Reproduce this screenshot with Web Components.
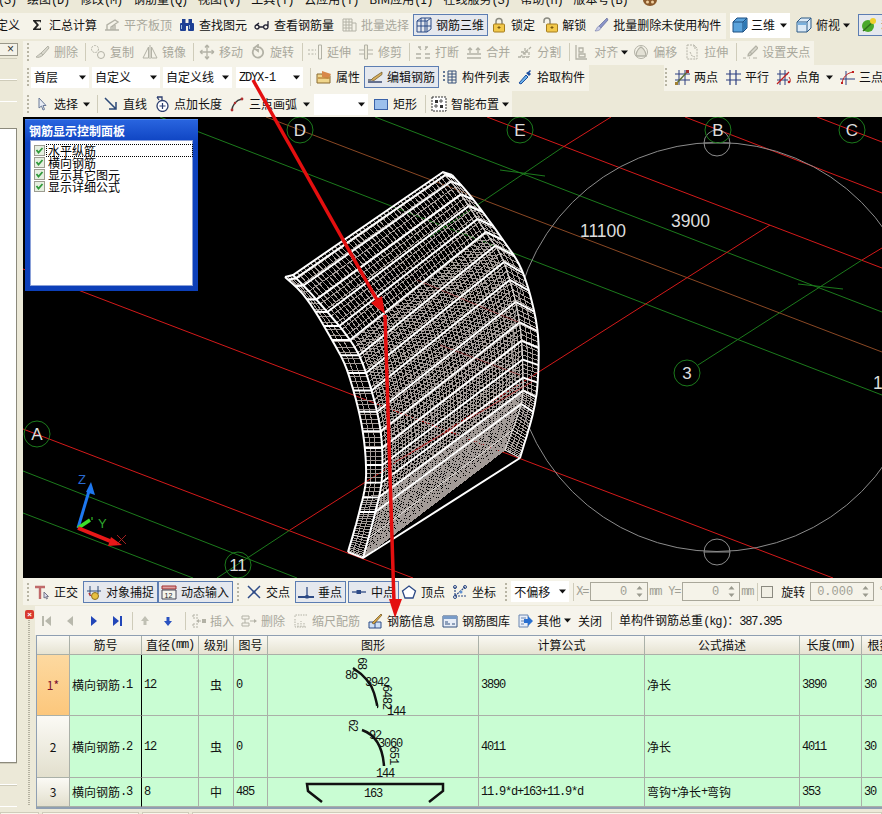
<!DOCTYPE html>
<html lang="zh">
<head>
<meta charset="utf-8">
<title>钢筋三维</title>
<style>
  html, body { margin: 0; padding: 0; }
  body {
    width: 882px; height: 814px; overflow: hidden; position: relative;
    background: #ece9d8; color: #111;
    font: 12px/14px "Noto Sans CJK SC", "Liberation Sans", sans-serif;
    display: flex; flex-direction: column;
  }
  .n { font-family: "Liberation Mono", monospace; letter-spacing: -1.2px; }
  .work { display: flex; flex: 1; min-height: 0; }
  .col { flex: 1; min-width: 0; display: flex; flex-direction: column; }
</style>
</head>
<body>

<menu-bar></menu-bar>

<tool-row style="height:27px">
  <tool-strip style="width:726px;height:26px">
    <tool-btn style="margin-left:-7px">定义</tool-btn>
    <tool-btn icon="sigma" style="margin-left:2px">汇总计算</tool-btn>
    <tool-btn icon="flat" disabled>平齐板顶</tool-btn>
    <tool-btn icon="binoc">查找图元</tool-btn>
    <tool-btn icon="glasses">查看钢筋量</tool-btn>
    <tool-btn icon="batch" disabled>批量选择</tool-btn>
    <tool-btn icon="grid3d" active>钢筋三维</tool-btn>
    <tool-btn icon="lock">锁定</tool-btn>
    <tool-btn icon="unlock">解锁</tool-btn>
    <tool-btn icon="brush">批量删除未使用构件</tool-btn>
  </tool-strip>
  <tool-strip style="height:26px;background:none">
    <drop-down icon="cube" style="width:60px;margin:0 3px 0 4px;height:25px">三维</drop-down>
    <tool-btn icon="cube2" arrow="3">俯视</tool-btn>
    <tool-btn icon="leaf" active style="margin-left:4px">动态观察</tool-btn>
  </tool-strip>
</tool-row>

<div class="work">
  <side-panel></side-panel>
  <div class="col">
    <tool-row style="height:24px;margin-top:1px">
      <tool-strip style="width:791px">
        <tool-grip style="margin-left:3px"></tool-grip>
        <tool-btn icon="pen" disabled>删除</tool-btn>
        <tool-sep style="margin-left:1px"></tool-sep>
        <tool-btn icon="copy" disabled>复制</tool-btn>
        <tool-btn icon="mirror" disabled style="margin-left:1px">镜像</tool-btn>
        <tool-sep style="margin-left:1px"></tool-sep>
        <tool-btn icon="move" disabled style="margin-left:1px">移动</tool-btn>
        <tool-btn icon="rotate" disabled>旋转</tool-btn>
        <tool-sep style="margin-left:2px"></tool-sep>
        <tool-btn icon="extend" disabled>延伸</tool-btn>
        <tool-btn icon="trim" disabled>修剪</tool-btn>
        <tool-sep style="margin-left:1px"></tool-sep>
        <tool-btn icon="brk" disabled style="margin-left:1px">打断</tool-btn>
        <tool-btn icon="merge" disabled>合并</tool-btn>
        <tool-btn icon="split" disabled>分割</tool-btn>
        <tool-sep style="margin-left:2px"></tool-sep>
        <tool-btn icon="align" disabled arrow="3">对齐</tool-btn>
        <tool-btn icon="offset" disabled style="margin-left:-2px">偏移</tool-btn>
        <tool-btn icon="stretch" disabled>拉伸</tool-btn>
        <tool-sep style="margin-left:2px"></tool-sep>
        <tool-btn icon="gripper" disabled style="margin-left:1px">设置夹点</tool-btn>
      </tool-strip>
    </tool-row>

    <tool-row style="height:26px">
      <tool-strip style="width:566px">
        <tool-grip style="margin-left:3px"></tool-grip>
        <drop-down style="width:58px">首层</drop-down>
        <drop-down style="width:68px;margin-left:3px">自定义</drop-down>
        <drop-down style="width:69px;margin-left:3px">自定义线</drop-down>
        <drop-down style="width:67px;margin-left:4px"><span class="n">ZDYX-1</span></drop-down>
        <tool-sep style="margin-left:5px"></tool-sep>
        <tool-btn icon="folder" style="margin-left:1px">属性</tool-btn>
        <tool-btn icon="editpen" active>编辑钢筋</tool-btn>
        <tool-btn icon="list">构件列表</tool-btn>
        <tool-btn icon="dropper">拾取构件</tool-btn>
      </tool-strip>
      <tool-strip style="margin-left:75px;flex:1">
        <tool-grip></tool-grip>
        <tool-btn icon="twopt" style="margin-left:2px">两点</tool-btn>
        <tool-btn icon="parallel">平行</tool-btn>
        <tool-btn icon="ptangle" arrow="6">点角</tool-btn>
        <tool-btn icon="threept" style="margin-left:-1px">三点</tool-btn>
      </tool-strip>
    </tool-row>

    <tool-row style="height:26px">
      <tool-strip style="width:489px;padding-bottom:0">
        <tool-grip style="margin-left:3px"></tool-grip>
        <tool-btn icon="cursor" arrow="5">选择</tool-btn>
        <tool-sep style="margin-left:1px"></tool-sep>
        <tool-btn icon="line" style="margin-left:1px">直线</tool-btn>
        <tool-btn icon="ptlen">点加长度</tool-btn>
        <tool-btn icon="arc" arrow="6">三点画弧</tool-btn>
        <drop-down style="width:54px"></drop-down>
        <tool-btn icon="rect" style="margin-left:2px">矩形</tool-btn>
        <tool-sep style="margin-left:2px"></tool-sep>
        <tool-btn icon="smart" arrow="3" style="margin-left:1px">智能布置</tool-btn>
      </tool-strip>
    </tool-row>

    <cad-view>
      <control-panel>
        <check-item focused>水平纵筋</check-item>
        <check-item>横向钢筋</check-item>
        <check-item>显示其它图元</check-item>
        <check-item>显示详细公式</check-item>
      </control-panel>
    </cad-view>

    <tool-row style="height:27px">
      <tool-strip style="flex:1;height:27px;padding-bottom:0">
        <tool-grip style="margin-left:3px"></tool-grip>
        <tool-btn icon="ortho">正交</tool-btn>
        <tool-btn icon="snap" active style="margin-left:1px">对象捕捉</tool-btn>
        <tool-btn icon="dyn" active>动态输入</tool-btn>
        <tool-grip style="margin-left:3px"></tool-grip>
        <tool-btn icon="inter" style="margin-left:2px">交点</tool-btn>
        <tool-btn icon="perp" active style="margin-left:1px">垂点</tool-btn>
        <tool-btn icon="mid" active style="margin-left:2px">中点</tool-btn>
        <tool-btn icon="vertex" style="margin-left:-1px">顶点</tool-btn>
        <tool-btn icon="coord">坐标</tool-btn>
        <tool-grip style="margin-left:4px"></tool-grip>
        <drop-down style="width:58px;margin-left:2px">不偏移</drop-down>
        <tool-sep style="margin-left:2px"></tool-sep>
        <dim-label style="margin-left:1px;width:14px">X=</dim-label>
        <spin-input style="width:58px">0</spin-input>
        <dim-label style="margin-left:1px;width:19px">mm</dim-label>
        <dim-label style="width:14px">Y=</dim-label>
        <spin-input style="width:58px">0</spin-input>
        <dim-label style="margin-left:1px;width:14px">mm</dim-label>
        <tool-sep></tool-sep>
        <check-box style="margin-left:2px"></check-box>
        <tool-btn style="margin-left:5px">旋转</tool-btn>
        <spin-input style="width:64px;margin-left:1px">0.000</spin-input>
        <dim-label style="margin-left:4px;width:8px">°</dim-label>
      </tool-strip>
    </tool-row>

    <rebar-panel></rebar-panel>
  </div>
</div>

<note-arrows></note-arrows>

<script>
const G = '#b3b2a6';
const ICONS = {
  sigma: `<path d="M4 3h8v3l-1-1.6H7l3 3.6-3 3.6h4l1-1.6v3H4v-1l3.6-4L4 4z" fill="#222"/>`,
  flat: `<path d="M1 13h14M3 13V8l8-5 3 2-7 5v3M11 13V8M9 13V9" stroke="${G}" stroke-width="1.4" fill="none"/>`,
  binoc: `<g fill="#1d3f94"><rect x="1" y="6" width="6" height="8" rx="1"/><rect x="9" y="6" width="6" height="8" rx="1"/><rect x="3" y="2" width="3.5" height="5"/><rect x="9.5" y="2" width="3.5" height="5"/><rect x="6" y="6" width="4" height="3"/></g><path d="M2.5 8v4M10.5 8v4" stroke="#9bd"/>`,
  glasses: `<path d="M5 10a2 2 0 1 1-4 0 2 2 0 0 1 4 0zM14 4v6a2.2 2.2 0 1 1-4.4 0 2.2 2.2 0 0 1 4.4 0M5 10h4.6M1.5 8.5 5 6" stroke="#223" stroke-width="1.3" fill="none"/>`,
  batch: `<path d="M2 2h9v12H2zM2 5h9M2 8h9M2 11h9M5 2v12M8 2v12M11 6h4v8h-4" stroke="${G}" fill="none"/>`,
  grid3d: `<path d="M1 4 5 1h10v11l-4 3H1zM1 4h10v11M11 4l4-3M5 1v14M9 1v14M1 9h14" stroke="#2b4a86" fill="none"/>`,
  lock: `<path d="M5 7V4.5a3 3 0 0 1 6 0V7" stroke="#8a8a80" stroke-width="1.5" fill="none"/><rect x="2.5" y="7" width="11" height="8" rx="1" fill="#f2c84a" stroke="#a57d1e"/><path d="M8 9v3M6.500 10.500h3" stroke="#7a5a10"/>`,
  unlock: `<path d="M2 6V4a3 3 0 0 1 6 0v3" stroke="#8a8a80" stroke-width="1.5" fill="none"/><rect x="4.500" y="7" width="11" height="8" rx="1" fill="#f2c84a" stroke="#a57d1e"/><path d="M10 9v3M8.500 10.500h3" stroke="#7a5a10"/>`,
  brush: `<path d="M14 1 6 9l2 2 7-8z" fill="#8a94c8" stroke="#555f90" stroke-width=".6"/><path d="M6 9c-2 .5-2 3-4 5 3 0 5.500-1 6-3z" fill="#c8cce8" stroke="#7078a8" stroke-width=".6"/>`,
  cube: `<path d="M1 5 5 1h10v10l-4 4H1z" fill="#5aa3dc" stroke="#1d4e80"/><path d="M1 5h10v10M11 5l4-4" stroke="#1d4e80" fill="none"/><path d="M11.500 5.500 14.500 2.500v8l-3 3z" fill="#2d78b4"/>`,
  cube2: `<path d="M1 5 5 1h10v10l-4 4H1z" fill="#dceaf6" stroke="#2d5a86"/><path d="M1 5h10v10M11 5l4-4" stroke="#2d5a86" fill="none"/><path d="M1.500 5.500h9V8h-9z" fill="#7ab0dc"/>`,
  leaf: `<circle cx="7" cy="9" r="6" fill="#4aa82a"/><path d="M2 14 14 3" stroke="#2f6e1a" stroke-width="1.500"/><circle cx="12" cy="4" r="3" fill="#f0d030"/>`,
  pen: `<path d="M14 2 7 9l2 2 6-7zM7 9c-2 1-3 3-5 4 2 1 5 0 7-2" stroke="${G}" fill="#d8d7cc"/>`,
  copy: `<circle cx="5" cy="5" r="3.500" stroke="${G}" fill="none" stroke-dasharray="2 1"/><circle cx="11" cy="11" r="3.500" stroke="${G}" fill="none"/>`,
  mirror: `<path d="M8 1v14" stroke="${G}"/><path d="M6.500 3v11H1zM9.500 3v11H15z" stroke="${G}" fill="none"/>`,
  move: `<path d="M8 1v14M1 8h14M8 1 6 3.500M8 1l2 2.500M8 15l-2-2.500M8 15l2-2.500M1 8l2.500-2M1 8l2.500 2M15 8l-2.500-2M15 8l-2.500 2" stroke="${G}" stroke-width="1.300" fill="none"/>`,
  rotate: `<path d="M4 5a5.200 5.200 0 1 0 4-1.800V1L4 4l4 3V5" stroke="${G}" stroke-width="1.800" fill="none"/>`,
  extend: `<path d="M1 6h8M1 10h8" stroke="${G}" stroke-dasharray="2 1.500"/><path d="M11.500 1h3v14h-3z" stroke="${G}" fill="none"/>`,
  trim: `<path d="M1 6h14M1 10h14" stroke="${G}"/><path d="M6.500 1h3v14h-3z" stroke="${G}" fill="#ece9d8"/>`,
  brk: `<path d="M1 10h5M10 10h5M1 14h5M10 14h5M6 6 4 3M10 6l2-3M3 3h3M10 3h3" stroke="${G}" stroke-width="1.300" fill="none"/>`,
  merge: `<path d="M1 10h14M1 14h14M4 4v5M12 4v5M2 6l2-2 2 2M10 6l2-2 2 2" stroke="${G}" stroke-width="1.300" fill="none"/>`,
  split: `<path d="M1 13h12M3 13l11-10M4 8h8M8 4v9M12 8v5" stroke="${G}" stroke-width="1.300" stroke-dasharray="3 1" fill="none"/>`,
  align: `<path d="M2 1v14h11M5 4h4v4H5zM5 10h6v3H5z" stroke="${G}" stroke-width="1.300" fill="none"/>`,
  offset: `<circle cx="8" cy="8" r="6.500" stroke="${G}" fill="none"/><path d="M3 12c0-6 5-9 5-9s5 3 5 9H3" stroke="${G}" stroke-width="1.400" fill="#e3e1d5"/>`,
  stretch: `<path d="M3 1h7l3 3v11H3zM10 1v3h3M6 8l2 4 3 1" stroke="${G}" stroke-dasharray="2 1" fill="none"/>`,
  gripper: `<path d="M14 2 8 8l2 2 6-6zM8 8c-1 1-2 3-2 4 1.500 0 3-1 4-2M1 14h3M7 14h1M11 14h4" stroke="${G}" stroke-width="1.200" fill="#dad9ce"/>`,
  folder: `<path d="M1 5h5l1 1.500h7V14H1z" fill="#f0d68c" stroke="#8a6a30"/><path d="M6 2 15 5l-3 5-6-2z" fill="#d8884a"/><path d="M2 9h12" stroke="#c08a40" stroke-width="1.500"/>`,
  editpen: `<path d="M1 13h14" stroke="#3a4a70" stroke-width="1.500"/><path d="M15 3 6 9l-2 2 3 .5 8-6z" fill="#d8b060" stroke="#6a5020" stroke-width=".7"/><path d="M1 11h3" stroke="#222"/>`,
  list: `<path d="M6 2h8v12H6zM6 5h8M6 8h8M6 11h8M10 2v12" stroke="#36507a" fill="none"/><path d="M1 3h3M1 7h3M1 11h3" stroke="#36507a" stroke-width="1.600" stroke-dasharray="2 1"/>`,
  dropper: `<path d="M2 14 9 6l2 2-7 7z" fill="#6ab0e8" stroke="#1d4e9e"/><path d="M9 4 12 7l2-2-1.500-1.500L14 2l-1-1-1.500 1.500z" fill="#1d4e9e"/>`,
  twopt: `<path d="M1 5h15M1 11h15M5 1v15M11 1v15" stroke="#2d3f80"/><path d="M2 15 14 2" stroke="#5a7030" stroke-width="1.300"/><rect x="12" y="1" width="3" height="3" fill="#a03030"/><rect x="1" y="13" width="3" height="3" fill="#a08030"/>`,
  parallel: `<path d="M1 5h15M1 11h15M5 1v15M11 1v15" stroke="#2d3f80" stroke-width="1.200"/>`,
  ptangle: `<path d="M1 5h11M1 11h11M4 1v15M9 1v15" stroke="#2d3f80"/><path d="M1 15 13 3" stroke="#c02020" stroke-width="1.300"/><path d="M13 8a5 5 0 0 1 1 5" stroke="#c02020" fill="none"/><circle cx="13" cy="13" r="1.300" fill="#c02020"/>`,
  threept: `<path d="M1 10h15M7 2v14" stroke="#2d3f80"/><path d="M3 14C4 8 8 4 14 3" stroke="#c02020" fill="none"/><rect x="2" y="13" width="2" height="2" fill="#c02020"/><rect x="13" y="2" width="2" height="2" fill="#c02020"/>`,
  cursor: `<path d="M5 2v10l2.500-2 1.500 4 1.500-.6-1.500-3.900h3z" fill="#e8ecf4" stroke="#6a7a98"/>`,
  line: `<path d="M2 2 13 13M13 6v7H6" stroke="#2d4a78" stroke-width="1.500" fill="none"/>`,
  ptlen: `<circle cx="8.500" cy="10" r="5.500" stroke="#2d3f70" stroke-width="1.300" fill="#fff"/><path d="M8.500 7v6M5.500 10h6" stroke="#2d3f70" stroke-width="1.200"/><path d="M3 1h5v3M3 1l2 3" stroke="#2d3f70" stroke-width="1.300" fill="none"/>`,
  arc: `<path d="M3 15C3 9 7 4 13 3" stroke="#3a3a3a" stroke-width="1.500" fill="none"/><circle cx="3" cy="14" r="1.400" fill="#b03030"/><circle cx="6" cy="7" r="1.200" fill="#b03030"/><circle cx="13" cy="3" r="1.400" fill="#b03030"/>`,
  rect: `<rect x="1.500" y="3.500" width="13" height="10" fill="#9cc0ec" stroke="#3a62a8"/>`,
  smart: `<path d="M1 1h14v14H1z" stroke="#333" stroke-dasharray="2 1" fill="#fff"/><path d="M4 4h3v3H4zM9 9h3v3H9z" fill="#333"/><path d="M10 3v4M8 5h4M3 10h4M5 8v4" stroke="#555"/>`,
  ortho: `<path d="M1 3h10M6 3v12" stroke="#c06a6a" stroke-width="2.400"/><path d="M10 8v6l1.500-1 1 2 1-.5-1-2h2z" fill="#dde" stroke="#778"/>`,
  snap: `<path d="M1 7h14M4 2v8M12 2v8" stroke="#2d4a78"/><circle cx="9" cy="12" r="3.500" fill="#e8c040" stroke="#8a7020"/><path d="M3 9l1.500 3" stroke="#b03030" stroke-width="1.500"/>`,
  dyn: `<path d="M1 2h14v3H1z" fill="#e0a0a0" stroke="#a03030"/><path d="M1 6h14v9H1z" fill="#f4f4ec" stroke="#445"/><text x="3.500" y="13.500" font-size="7" font-family="Liberation Sans" fill="#222">12</text>`,
  inter: `<path d="M2 2 14 14M14 2 2 14" stroke="#2d4a86" stroke-width="1.500"/><circle cx="8" cy="8" r="1.500" fill="#2d4a86"/>`,
  perp: `<path d="M0 13h16" stroke="#2d4a86" stroke-width="2"/><path d="M9 3v9" stroke="#2d4a86" stroke-width="1.300"/><rect x="7.500" y="11" width="3" height="3.500" fill="#2d4a86"/>`,
  mid: `<path d="M1 8h14" stroke="#2d4a86" stroke-width="1.300"/><rect x="5.500" y="6" width="4.500" height="4" fill="#2d4a86"/>`,
  vertex: `<path d="M8 2 14.500 7l-2.500 7H4L1.500 7z" stroke="#2d4a86" stroke-width="1.300" fill="#fff"/>`,
  coord: `<path d="M3 3v9h11M3 12 13 3" stroke="#2d4a86" stroke-dasharray="2 1" stroke-width="1.200" fill="none"/><circle cx="3" cy="3" r="1.500" fill="none" stroke="#2d4a86"/><circle cx="13" cy="3" r="1.500" fill="none" stroke="#2d4a86"/><circle cx="3" cy="13" r="1.500" fill="none" stroke="#2d4a86"/><circle cx="9" cy="8" r="1.500" fill="#6090d0"/>`,
  first: `<path d="M5 3v10" stroke="#b8b8ac" stroke-width="2"/><path d="M13 3v10L7 8z" fill="#b8b8ac"/>`,
  prev: `<path d="M11 3v10L5 8z" fill="#b8b8ac"/>`,
  next: `<path d="M5 3v10l6-5z" fill="#2246b8"/>`,
  last: `<path d="M3 3v10l6-5z" fill="#2246b8"/><path d="M11 3v10" stroke="#2246b8" stroke-width="2"/>`,
  up: `<path d="M8 3 4 8h2.500v4h3V8H12z" fill="#c0c0b4"/>`,
  down: `<path d="M8 13 4 8h2.500V4h3v4H12z" fill="#2a52c0"/>`,
  insert: `<path d="M3 2h5M3 2v3h5M3 11h5M3 11v3h5M9 8h5" stroke="${G}" stroke-dasharray="2 1" fill="none"/><path d="M9 6l-3 2 3 2z" fill="${G}"/><rect x="12" y="6" width="4" height="4" fill="${G}"/>`,
  del: `<path d="M1 3h7v3H1zM1 10h7v3H1zM4 6v4" stroke="${G}" fill="none"/><path d="M9 8h5" stroke="${G}"/><path d="M13 6l3 2-3 2z" fill="${G}"/>`,
  scale: `<path d="M3 4V2h12M3 6v8h12M6 14v-4M9 14v-6M12 14v-4" stroke="${G}" stroke-dasharray="1.500 1" fill="none"/>`,
  info: `<path d="M2 9h12v6H2zM8 9v6" stroke="#2d4a86" fill="#cfe0f4"/><path d="M14 1 5 10l2 1 8-9z" fill="#d8a848" stroke="#6a5020" stroke-width=".7"/>`,
  lib: `<path d="M1 3h14v11H1z" stroke="#33507e" fill="#e8eef8"/><path d="M1 3h14v3H1z" fill="#7a9cc8"/><path d="M3 11h5M10 11h3M3 9h3" stroke="#33507e"/>`,
  other: `<path d="M2 2h9v12H2zM4 5h5M4 8h3M4 11h3" stroke="#6a86b0" fill="#e8eef8"/><path d="M7 6h4V3l5 5-5 5v-3H7z" fill="#2a70d0"/>`
};

const svgArrow = gap => `<svg width="7" height="5" viewBox="0 0 7 5" style="margin-left:${gap}px;flex:none"><path d="M0 .5h7L3.500 4.500z" fill="#111"/></svg>`;

class ToolRow extends HTMLElement {
  connectedCallback() {
    if (this.shadowRoot) return;
    this.attachShadow({ mode: 'open' }).innerHTML = `
      <style>:host { display: flex; align-items: stretch; flex: none; overflow: hidden; }</style><slot></slot>`;
  }
}

class ToolStrip extends HTMLElement {
  connectedCallback() {
    if (this.shadowRoot) return;
    this.attachShadow({ mode: 'open' }).innerHTML = `
      <style>:host { display: flex; align-items: center; flex: none; box-sizing: border-box; padding-bottom: 2px; background: #f5f3e9; min-width: 0; overflow: hidden; }</style><slot></slot>`;
  }
}

class ToolBtn extends HTMLElement {
  connectedCallback() {
    if (this.shadowRoot) return;
    const icon = this.getAttribute('icon');
    const arrow = this.getAttribute('arrow');
    this.attachShadow({ mode: 'open' }).innerHTML = `
      <style>
        :host {
          display: inline-flex; align-items: center; flex: none; box-sizing: border-box;
          height: 22px; padding: 0 3px 0 2px; border: 1px solid transparent; white-space: nowrap;
        }
        :host([active]) { border-color: #5c7db2; background: #e5e8ee; }
        :host([disabled]) { color: #a9a89c; }
        svg.i { width: 16px; height: 16px; flex: none; margin-right: 4px; }
        :host([bare]) svg.i { margin-right: 0; }
      </style>
      ${icon ? `<svg class="i" viewBox="0 0 16 16">${ICONS[icon]}</svg>` : ''}<slot></slot>${arrow ? svgArrow(arrow) : ''}`;
  }
}

class ToolSep extends HTMLElement {
  connectedCallback() {
    if (this.shadowRoot) return;
    this.attachShadow({ mode: 'open' }).innerHTML = `
      <style>:host { display: block; flex: none; width: 4px; height: 18px; background: linear-gradient(#cfccba, #cfccba) 2px 0 / 1px 100% no-repeat; }</style>`;
  }
}

class ToolGrip extends HTMLElement {
  connectedCallback() {
    if (this.shadowRoot) return;
    this.attachShadow({ mode: 'open' }).innerHTML = `
      <style>:host { display: block; flex: none; width: 5px; height: 18px; background: repeating-linear-gradient(#b8b5a4 0 2px, transparent 2px 4px) 1px 0 / 2px 100% no-repeat; }</style>`;
  }
}

class DropDown extends HTMLElement {
  connectedCallback() {
    if (this.shadowRoot) return;
    const icon = this.getAttribute('icon');
    this.attachShadow({ mode: 'open' }).innerHTML = `
      <style>
        :host { display: inline-flex; align-items: center; flex: none; box-sizing: border-box; height: 21px; background: #fff; padding: 0 3px 0 3px; white-space: nowrap; }
        .t { flex: 1; min-width: 0; }
        svg.i { width: 16px; height: 16px; flex: none; margin-right: 3px; margin-left: -1px; }
      </style>
      ${icon ? `<svg class="i" viewBox="0 0 16 16">${ICONS[icon]}</svg>` : ''}<span class="t"><slot></slot></span>${svgArrow(0)}`;
  }
}

class DimLabel extends HTMLElement {
  connectedCallback() {
    if (this.shadowRoot) return;
    this.attachShadow({ mode: 'open' }).innerHTML = `
      <style>:host { display: block; flex: none; color: #a09f94; font: 12px "Liberation Mono", monospace; letter-spacing: -1.2px; }</style><slot></slot>`;
  }
}

class SpinInput extends HTMLElement {
  connectedCallback() {
    if (this.shadowRoot) return;
    this.attachShadow({ mode: 'open' }).innerHTML = `
      <style>
        :host { display: flex; align-items: center; flex: none; box-sizing: border-box; height: 19px; border: 1px solid #a9a79a; color: #a09f94; font: 12px "Liberation Mono", monospace; }
        .v { flex: 1; text-align: right; padding-right: 8px; }
        svg { flex: none; margin-right: 3px; }
      </style>
      <span class="v"><slot></slot></span>
      <svg width="9" height="15" viewBox="0 0 9 15"><path d="M4.500 2 7.500 5.500h-6zM4.500 13l3-3.500h-6z" fill="#9a9a8e"/></svg>`;
  }
}

class CheckBox extends HTMLElement {
  connectedCallback() {
    if (this.shadowRoot) return;
    this.attachShadow({ mode: 'open' }).innerHTML = `
      <style>:host { display: block; flex: none; width: 12px; height: 12px; box-sizing: border-box; border: 1px solid #8b8a80; background: #f1efe4; }</style>`;
  }
}

class MenuBar extends HTMLElement {
  connectedCallback() {
    if (this.shadowRoot) return;
    const items = [['', 'S'], ['绘图', 'D'], ['修改', 'M'], ['钢筋量', 'Q'], ['视图', 'V'], ['工具', 'T'], ['云应用', 'Y'], ['BIM应用', 'I'], ['在线服务', 'S'], ['帮助', 'H'], ['版本号', 'B']];
    this.attachShadow({ mode: 'open' }).innerHTML = `
      <style>
        :host { display: block; flex: none; height: 13px; overflow: hidden; background: #ece9d8; }
        .in { display: flex; gap: 11px; margin: -7px 0 0 -2px; line-height: 12px; white-space: nowrap; align-items: center; }
        .k { font-family: "Liberation Mono", monospace; letter-spacing: -1.2px; }
        .face { width: 16px; height: 14px; margin-left: 4px; }
      </style>
      <div class="in">
        ${items.map(([a, b]) => `<span>${a}<span class="k">(${b})</span></span>`).join('')}
        <svg class="face" viewBox="0 0 16 14"><ellipse cx="8" cy="7" rx="7" ry="6" fill="#8a5a2c"/><circle cx="5.500" cy="9" r="1.500" fill="#f0d0a0"/><circle cx="10.500" cy="9" r="1.500" fill="#f0d0a0"/></svg>
      </div>`;
  }
}

class SidePanel extends HTMLElement {
  connectedCallback() {
    if (this.shadowRoot) return;
    this.attachShadow({ mode: 'open' }).innerHTML = `
      <style>
        :host { display: flex; flex-direction: column; flex: none; width: 23px; box-sizing: border-box; padding-right: 6px; }
        .x { height: 11px; margin: 3px -1px 2px 0; border: 1px solid #9a988a; border-left: 0; background: #f4f2e8; font: 12px/10px "Liberation Sans", sans-serif; text-align: right; padding-right: 3px; color: #333; flex: none; }
        .r { height: 22px; border-bottom: 1px solid #fff; border-top: 1px solid #cfccba; box-sizing: border-box; flex: none; }
        .w { flex: 1; background: #fff; border: 1px solid #8c8a7c; border-left: 0; margin-top: 26px; }
      </style>
      <div class="x">×</div>
      <div class="r"></div><div class="r"></div>
      <div class="w"></div>
      <div class="r"></div><div class="r"></div>
      <div style="height:7px;flex:none"></div>`;
  }
}

class CheckItem extends HTMLElement {
  connectedCallback() {
    if (this.shadowRoot) return;
    this.attachShadow({ mode: 'open' }).innerHTML = `
      <style>
        :host { display: flex; align-items: center; height: 12px; color: #000; white-space: nowrap; }
        svg { flex: none; margin-right: 2px; }
        .t { flex: 1; padding-left: 1px; line-height: 11px; height: 11px; }
        :host([focused]) .t { outline: 1px dotted #000; }
      </style>
      <svg width="11" height="11" viewBox="0 0 11 11"><rect x=".5" y=".5" width="10" height="10" fill="#e6efe0" stroke="#9c9c90"/><path d="M2.500 5 4.500 7.500 8.500 3" stroke="#2f9a3a" stroke-width="1.800" fill="none"/></svg>
      <span class="t"><slot></slot></span>`;
  }
}

class ControlPanel extends HTMLElement {
  connectedCallback() {
    if (this.shadowRoot) return;
    this.attachShadow({ mode: 'open' }).innerHTML = `
      <style>
        :host { position: absolute; left: 2px; top: 2px; width: 173px; height: 172px; box-sizing: border-box; display: flex; flex-direction: column; padding: 0 5px 5px; background: linear-gradient(#2a66e0, #0d42c0 14%, #0c3fb8); box-shadow: inset 0 1px #4d86ee; }
        .h { height: 21px; flex: none; line-height: 24px; color: #fff; font-weight: 700; margin-left: -1px; }
        .b { flex: 1; background: #fff; border: 1px solid #8aa0d8; padding: 3px 0 0 3px; }
      </style>
      <div class="h">钢筋显示控制面板</div>
      <div class="b"><slot></slot></div>`;
  }
}

class CadView extends HTMLElement {
  connectedCallback() {
    if (this.shadowRoot) return;
    this.attachShadow({ mode: 'open' }).innerHTML = `
      <style>
        :host { display: block; position: relative; flex: none; height: 461px; background: #000; overflow: hidden; }
        svg { display: block; }
        text { font-family: "Liberation Sans", sans-serif; fill: #ddd; }
      </style>
      <svg width="859" height="461" viewBox="23 117 859 461">${this.scene()}</svg>
      <slot></slot>`;
  }

  scene() {
    const RED = '#d41a1a', GREEN = '#1c7a1c', BROWN = '#8a4824', GRAY = '#8c8c8c';
    const ln = (c, ...p) => `<polyline points="${p.join(' ')}" stroke="${c}" fill="none"/>`;
    const lines = [
      ln(RED, '487,117', '882,268'), ln(RED, '685,117', '882,193'), ln(RED, '817,117', '882,142'),
      ln(RED, '23,269', '833,578'), ln(RED, '23,429', '413,578'),
      ln(BROWN, '266,117', '882,352'),
      ln(GREEN, '375,117', '882,312'), ln(GREEN, '160,117', '882,395'),
      ln(GREEN, '23,471', '297,578'), ln(GREEN, '23,513', '193,578'),
      ln(GREEN, '217,578', '290,530'), ln(RED, '290,530', '770,225'),
      ln(GREEN, '430,237', '563,147'), ln(RED, '563,147', '611,117'),
      ln(GREEN, '698,365', '862,260'), ln(RED, '862,260', '882,248'),
      ln(GREEN, '500,170', '545,176'), ln(GREEN, '798,284', '843,289')
    ];
    const circle = (x, y, r, c) => `<circle cx="${x}" cy="${y}" r="${r}" stroke="${c}" fill="none"/>`;
    const gray = circle(717, 347, 204.5, GRAY) + circle(717, 143, 13, GRAY) + circle(717, 552, 13, GRAY) +
      ln(GRAY, '704,552', '730,552') + ln(GRAY, '704,143', '730,143');
    const axes = [['D', 300, 130], ['E', 520, 130], ['B', 718, 130], ['C', 852, 130], ['3', 687, 373], ['A', 37, 434], ['11', 238, 565]];
    const labels = axes.map(([t, x, y]) => circle(x, y, 13, GREEN) +
      `<text x="${x}" y="${y + 6}" font-size="17" text-anchor="middle">${t}</text>`).join('');
    const dims = `<text x="580" y="237" font-size="17.500">11100</text><text x="671" y="227" font-size="17.500">3900</text><text x="873" y="389" font-size="17.500">1</text>`;
    const axis = `
      <path d="M78 528 89 491" stroke="#1e78f0" stroke-width="3"/><path d="M91 482l4 13-9-3z" fill="#1e78f0"/>
      <path d="M78 528 90 520" stroke="#3be02a" stroke-width="3.500"/>
      <path d="M78 528 110 541" stroke="#e81818" stroke-width="4"/><path d="M122 545l-14 1 3-9z" fill="#e81818"/>
      <text x="78" y="484" font-size="13" style="fill:#2a6ad0">Z</text>
      <text x="98" y="528" font-size="13" style="fill:#2ea82e">Y</text>
      <path d="M92 517v3" stroke="#3be02a"/>
      <path d="M117 535l9 9M126 535l-9 9" stroke="#a02020"/>`;
    return lines.join('') + gray + labels + dims + axis + this.wall();
  }

  // the wall is a mesh over four edge curves, sampled with a catmull-rom spline
  wall() {
    const S = [175, 198, 240, 273, 327, 377, 413, 458];
    const E = [
      [[285, 277], [306, 298], [332, 340], [348, 373], [362, 427], [366, 477], [359, 513], [348, 552]],
      [[293, 275], [315, 298], [350, 340], [366, 373], [380, 427], [382, 477], [375, 513], [363, 558]],
      [[443, 172], [460, 193], [486, 232], [504, 262], [519, 318], [523, 372], [521, 405], [505, 450]],
      [[452, 175], [472, 198], [503, 240], [523, 273], [537, 327], [538, 377], [533, 413], [520, 458]]
    ];
    const cr = (a, b, c, d, t) => 0.5 * (2 * b + (c - a) * t + (2 * a - 5 * b + 4 * c - d) * t * t + (3 * b - a - 3 * c + d) * t * t * t);
    const edge = (tab, s) => {
      let i = 0;
      while (i < S.length - 2 && s > S[i + 1]) i++;
      const t = (s - S[i]) / (S[i + 1] - S[i]);
      const a = tab[Math.max(i - 1, 0)], b = tab[i], c = tab[i + 1], d = tab[Math.min(i + 2, S.length - 1)];
      return [cr(a[0], b[0], c[0], d[0], t), cr(a[1], b[1], c[1], d[1], t)];
    };
    const stops = [0, 0.1, 0.9, 1];
    const P = (s, u) => {
      let k = u < 0.1 ? 0 : u < 0.9 ? 1 : 2;
      const t = (u - stops[k]) / (stops[k + 1] - stops[k]);
      const a = edge(E[k], s), b = edge(E[k + 1], s);
      return [a[0] + (b[0] - a[0]) * t, a[1] + (b[1] - a[1]) * t];
    };
    const f = p => p[0].toFixed(1) + ' ' + p[1].toFixed(1);
    const rung = s => `M${f(P(s, 0))}L${f(P(s, 0.1))}L${f(P(s, 0.9))}L${f(P(s, 1))}`;
    const rail = (u, a = 175, b = 458) => {
      let d = '';
      for (let s = a; s <= b; s += 5) d += (d ? 'L' : 'M') + f(P(s, u));
      return d + 'L' + f(P(b, u));
    };
    let mesh = '', cross = '';
    for (let s = 175; s < 458;) {
      mesh += rung(s);
      s += s < 300 ? 6 : s < 400 ? 4.5 : 2.4;
    }
    const us = [0.03, 0.06, 0.1];
    for (let u = 0.12; u < 0.9; u += 0.0185) us.push(u);
    us.push(0.93, 0.96);
    us.forEach(u => { mesh += rail(u); });
    // second layer of bars, it makes the middle and the foot of the wall read as noise
    for (let s = 240; s < 455; s += s < 400 ? 3.5 : 2.4) {
      for (let u = 0.12; u < 0.86; u += 0.04) {
        const a = P(s, u), b = P(Math.min(s + 6, 458), u + 0.035);
        cross += `M${f(a)}L${f(b)}`;
      }
    }
    const heavy = [175, 180, 188, 200, 213, 226, 240, 256, 273, 292, 312, 331, 347, 364, 382, 397, 412];
    return `
      <path d="${mesh}" stroke="#a39b97" fill="none" shape-rendering="crispEdges"/>
      <path d="${cross}" stroke="#a39b97" fill="none" shape-rendering="crispEdges"/>
      <path d="M417 280 537 330M440 345 520 375" stroke="#a03030" opacity=".7" fill="none"/>
      <path d="M395 462 535 380" stroke="#c02828" opacity=".8" fill="none"/>
      <path d="${heavy.map(rung).join('')}" stroke="#fff" stroke-width="2" fill="none"/>
      <path d="${rung(436)}" stroke="#e8e4e0" fill="none"/>
      <path d="${rail(0)}${rail(0.1)}${rail(1)}M${f(P(458, 0))}L${f(P(458, 0.1))}L${f(P(458, 1))}" stroke="#fff" stroke-width="2" fill="none"/>
      <path d="${rail(0.9)}M${f(P(458, 0.9))}L${f(P(458, 1))}" stroke="#e8e4e0" fill="none"/>`;
  }
}

class RebarTable extends HTMLElement {
  connectedCallback() {
    if (this.shadowRoot) return;
    const num = t => `<span class="n">${t}</span>`;
    const bar = (box, body) => `<svg viewBox="${box}" width="210" height="${box.split(' ')[3]}">${body}</svg>`;
    const lab = (x, y, t, r) => `<text x="${x}" y="${y}" text-anchor="middle"${r ? ` transform="rotate(${r} ${x} ${y})"` : ''}>${t}</text>`;
    const fig1 = bar('268 654 210 61', `<path d="M353 667Q370 678 374 692T377 706" stroke="#111" stroke-width="2.500" fill="none"/>` +
      lab(351, 678, '86') + lab(377, 685, '3942') + lab(358, 662, '68', 90) + lab(383, 696, '6482', 90) + lab(396, 714, '144'));
    const fig2 = bar('268 715 210 62', `<path d="M362 729Q382 736 384 765" stroke="#111" stroke-width="2.500" fill="none"/>` +
      lab(349, 724, '62', 90) + lab(375, 738, '92') + lab(390, 746, '3060') + lab(390, 754, '651', 90) + lab(385, 776, '144'));
    const fig3 = bar('268 777 210 29', `<path d="M322 801 308 790 307 783H443L443 790 429 801" stroke="#111" stroke-width="2.500" fill="none"/>` +
      lab(373, 796, '163'));
    const head = ['', '筋号', '直径' + num('(mm)'), '级别', '图号', '图形', '计算公式', '公式描述', '长度' + num('(mm)'), '根数'];
    const rows = [
      ['1*', '横向钢筋' + num('.1'), '12', '虫', '0', fig1, '3890', '净长', '3890', '30'],
      ['2', '横向钢筋' + num('.2'), '12', '虫', '0', fig2, '4011', '净长', '4011', '30'],
      ['3', '横向钢筋' + num('.3'), '8', '中', '485', fig3, '11.9*d+163+11.9*d', '弯钩' + num('+') + '净长' + num('+') + '弯钩', '353', '30']
    ];
    const isNum = [0, 0, 1, 0, 1, 0, 1, 0, 1, 1];
    const cells = rows.map((r, i) => r.map((c, j) => {
      const cls = j === 0 ? `rh${i === 0 ? ' cur' : ''}` : j === 1 ? 'd blk' : j === 5 ? 'd fig' : j === 3 ? 'd ctr' : `d${isNum[j] ? ' n' : ''}`;
      return `<div class="${cls}">${c}</div>`;
    }).join('')).join('');
    this.attachShadow({ mode: 'open' }).innerHTML = `
      <style>
        :host { display: block; flex: none; border-top: 1px solid #8f9fb2; border-left: 1px solid #8f9fb2; border-bottom: 2px solid #8f9fb2; overflow: hidden; }
        .g { display: grid; grid-template-columns: 33px 72px 57px 35px 34px 211px 166px 155px 62px 36px; grid-template-rows: 19px 61px 62px 29px; width: 861px; }
        .g > div { box-sizing: border-box; border-right: 1px solid #aab0a8; border-bottom: 1px solid #aab0a8; display: flex; align-items: center; white-space: nowrap; overflow: hidden; }
        .g > .blk { border-right-color: #000; }
        .h { background: linear-gradient(#faf9f3, #e6e3d2); justify-content: center; }
        .rh { background: linear-gradient(#fbfaf5, #e2dfcd); justify-content: center; }
        .cur { background: linear-gradient(#fdd9a0, #fcc77c); color: #7a1030; }
        .d { background: #c9fdd3; padding-left: 2px; color: #111; }
        .ctr { justify-content: center; padding: 0; }
        .fig { padding: 0; }
        .n { font-family: "Liberation Mono", monospace; letter-spacing: -1.2px; }
        svg { display: block; flex: none; }
        text { font: 12px "Liberation Mono", monospace; letter-spacing: -1.2px; fill: #111; }
      </style>
      <div class="g">
        ${head.map(h => `<div class="h">${h}</div>`).join('')}
        ${cells}
      </div>`;
  }
}

class RebarPanel extends HTMLElement {
  connectedCallback() {
    if (this.shadowRoot) return;
    this.attachShadow({ mode: 'open' }).innerHTML = `
      <style>
        :host { display: flex; flex: 1; min-height: 0; flex-direction: column; padding-left: 13px; position: relative; }
        .bar { display: flex; align-items: center; height: 29px; flex: none; margin: 1px 0 0 -1px; background: #f6f4ec; overflow: hidden; }
        rebar-table { flex: none; }
        .close { position: absolute; left: 2px; top: 5px; width: 9px; height: 9px; border-radius: 2px; background: #d83a30; color: #fff; font: bold 8px/9px "Liberation Sans", sans-serif; text-align: center; }
        .dots { position: absolute; left: 5px; top: 15px; height: 186px; width: 2px; background: repeating-linear-gradient(#b4b1a0 0 1px, transparent 1px 2px); }
        .sum { padding-left: 6px; white-space: nowrap; }
        .k { font-family: "Liberation Mono", monospace; letter-spacing: -1.2px; }
        .tabs { display: flex; gap: 3px; flex: none; height: 5px; margin: 3px 0 0 -36px; }
        .tabs div { background: #f9f6ec; border: 1px solid #cfccba; border-bottom: 0; box-sizing: border-box; }
      </style>
      <div class="close">×</div><div class="dots"></div>
      <div class="bar">
        <tool-btn icon="first" bare disabled></tool-btn>
        <tool-btn icon="prev" bare disabled style="margin-left:1px"></tool-btn>
        <tool-btn icon="next" bare style="margin-left:1px"></tool-btn>
        <tool-btn icon="last" bare style="margin-left:1px"></tool-btn>
        <tool-sep></tool-sep>
        <tool-btn icon="up" bare disabled></tool-btn>
        <tool-btn icon="down" bare></tool-btn>
        <tool-sep style="margin-left:3px"></tool-sep>
        <tool-btn icon="insert" disabled>插入</tool-btn>
        <tool-btn icon="del" disabled>删除</tool-btn>
        <tool-btn icon="scale" disabled>缩尺配筋</tool-btn>
        <tool-btn icon="info">钢筋信息</tool-btn>
        <tool-btn icon="lib">钢筋图库</tool-btn>
        <tool-btn icon="other" arrow="3">其他</tool-btn>
        <tool-btn>关闭</tool-btn>
        <tool-sep style="margin-left:3px"></tool-sep>
        <div class="sum">单构件钢筋总重<span class="k">(kg)</span>：<span class="k">387.395</span></div>
      </div>
      <rebar-table></rebar-table>
      <div class="tabs">
        <div style="width:39px"></div><div style="width:97px"></div><div style="width:47px"></div><div style="flex:1"></div>
      </div>`;
  }
}

class NoteArrows extends HTMLElement {
  connectedCallback() {
    if (this.shadowRoot) return;
    this.attachShadow({ mode: 'open' }).innerHTML = `
      <style>:host { position: absolute; left: 0; top: 0; width: 882px; height: 814px; pointer-events: none; }</style>
      <svg width="882" height="814" viewBox="0 0 882 814">
        <path d="M253 80 377 300" stroke="#e40f0f" stroke-width="3.500" fill="none"/>
        <path d="M385 314 371 303 382 296z" fill="#e40f0f"/>
        <path d="M385 315 394 602" stroke="#e40f0f" stroke-width="3.500" fill="none"/>
        <path d="M395 618 389 599 402 599z" fill="#e40f0f"/>
      </svg>`;
  }
}

customElements.define('tool-row', ToolRow);
customElements.define('tool-strip', ToolStrip);
customElements.define('tool-btn', ToolBtn);
customElements.define('tool-sep', ToolSep);
customElements.define('tool-grip', ToolGrip);
customElements.define('drop-down', DropDown);
customElements.define('dim-label', DimLabel);
customElements.define('spin-input', SpinInput);
customElements.define('check-box', CheckBox);
customElements.define('menu-bar', MenuBar);
customElements.define('side-panel', SidePanel);
customElements.define('check-item', CheckItem);
customElements.define('control-panel', ControlPanel);
customElements.define('cad-view', CadView);
customElements.define('rebar-table', RebarTable);
customElements.define('rebar-panel', RebarPanel);
customElements.define('note-arrows', NoteArrows);
</script>
</body>
</html>
